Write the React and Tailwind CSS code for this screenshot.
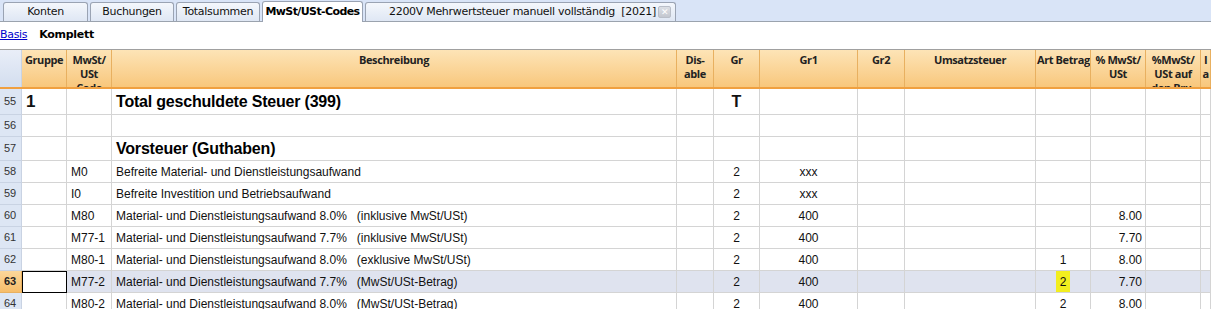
import React from "react";

const cols = "grid-cols-[22px_45px_45px_565px_37px_46px_98px_47px_131px_55px_55px_55px_10px]";

const headers = [
  "",
  "Gruppe",
  "MwSt/ USt Code",
  "Beschreibung",
  "Dis-able",
  "Gr",
  "Gr1",
  "Gr2",
  "Umsatzsteuer",
  "Art Betrag",
  "% MwSt/ USt",
  "%MwSt/ USt auf den Bru-",
  "I a",
];

const rows = [
  { n: 55, g: "1", code: "", desc: "Total geschuldete Steuer (399)", gr: "T", gr1: "", art: "", pct: "", big: true, h: "h-[26px]" },
  { n: 56, g: "", code: "", desc: "", gr: "", gr1: "", art: "", pct: "", h: "h-[22px]" },
  { n: 57, g: "", code: "", desc: "Vorsteuer (Guthaben)", gr: "", gr1: "", art: "", pct: "", big: true, h: "h-[24px]" },
  { n: 58, code: "M0", desc: "Befreite Material- und Dienstleistungsaufwand", gr: "2", gr1: "xxx", art: "", pct: "", h: "h-[22px]" },
  { n: 59, code: "I0", desc: "Befreite Investition und Betriebsaufwand", gr: "2", gr1: "xxx", art: "", pct: "", h: "h-[22px]" },
  { n: 60, code: "M80", desc: "Material- und Dienstleistungsaufwand 8.0%   (inklusive MwSt/USt)", gr: "2", gr1: "400", art: "", pct: "8.00", h: "h-[22px]" },
  { n: 61, code: "M77-1", desc: "Material- und Dienstleistungsaufwand 7.7%   (inklusive MwSt/USt)", gr: "2", gr1: "400", art: "", pct: "7.70", h: "h-[22px]" },
  { n: 62, code: "M80-1", desc: "Material- und Dienstleistungsaufwand 8.0%   (exklusive MwSt/USt)", gr: "2", gr1: "400", art: "1", pct: "8.00", h: "h-[22px]" },
  { n: 63, code: "M77-2", desc: "Material- und Dienstleistungsaufwand 7.7%   (MwSt/USt-Betrag)", gr: "2", gr1: "400", art: "2", pct: "7.70", sel: true, h: "h-[22px]" },
  { n: 64, code: "M80-2", desc: "Material- und Dienstleistungsaufwand 8.0%   (MwSt/USt-Betrag)", gr: "2", gr1: "400", art: "2", pct: "8.00", h: "h-[22px]" },
];

function Tab({ label, active, w, close }) {
  if (active) {
    return (
      <div className={"relative z-10 -mb-px flex h-[21px] items-center justify-center self-end whitespace-nowrap rounded-t-[3px] border border-b-0 border-[#9aa3b3] bg-white pt-[1px] text-[11px] font-bold tracking-[-0.6px] text-black " + w}>
        {label}
      </div>
    );
  }
  return (
    <div
      className={
        "flex h-[19px] items-center self-end whitespace-nowrap rounded-t-[3px] border border-b-0 border-[#9aa3b3] bg-gradient-to-b from-[#f4f7fc] to-[#dfe7f4] text-[11px] text-[#111] " +
        w +
        (close ? " justify-between pl-[23px] pr-[4px]" : " justify-center")
      }
    >
      <span className="whitespace-pre">{label}</span>
      {close && (
        <span className="flex h-[12px] w-[13px] items-center justify-center rounded-[2px] border border-[#b9bec8] bg-gradient-to-b from-[#dcdfe5] to-[#c3c7cf] text-[9px] font-bold leading-none text-white">
          ✕
        </span>
      )}
    </div>
  );
}

export default function App() {
  return (
    <div className="h-[309px] w-[1211px] overflow-hidden bg-white font-['Liberation_Sans',Arial,sans-serif]">
      {/* Tab bar */}
      <div className="flex h-[22px] items-end gap-[2px] border-b border-[#9ba3ae] bg-[#d9e4f7] pl-[3px] font-['DejaVu_Sans',sans-serif] tracking-[-0.3px]">
        <Tab label="Konten" w="w-[85px]" />
        <Tab label="Buchungen" w="w-[84px]" />
        <Tab label="Totalsummen" w="w-[84px]" />
        <Tab label="MwSt/USt-Codes" active w="w-[101px]" />
        <Tab label="2200V Mehrwertsteuer manuell vollständig  [2021]" w="w-[311px]" close />
      </div>

      {/* View selector */}
      <div className="flex h-[27px] items-center gap-[12px] pl-0 font-['DejaVu_Sans',sans-serif] text-[11px] tracking-[-0.3px]">
        <span className="text-[#0000cc] underline">Basis</span>
        <span className="font-bold text-black">Komplett</span>
      </div>

      {/* Grid */}
      <div className="border-t border-[#a0a0a0]">
        {/* Header */}
        <div className={"grid h-[39px] border-b-2 border-[#f0a040] " + cols}>
          {headers.map((h, i) =>
            i === 0 ? (
              <div key={i} className="border-r border-[#c9d3e3] bg-gradient-to-b from-[#e9eef8] to-[#d3deef]" />
            ) : (
              <div
                key={i}
                className={
                  "overflow-hidden border-r border-[#e8b060] bg-gradient-to-b from-[#fde4b6] to-[#f8c77c] px-[1px] pt-[3px] text-center font-['Open_Sans',sans-serif] text-[11px] font-bold leading-[14px] tracking-[-0.4px] text-[#222] " +
                  (i === 9 ? "whitespace-nowrap" : "")
                }
              >
                {h}
              </div>
            )
          )}
        </div>

        {/* Rows */}
        {rows.map((r) => {
          const bg = r.sel ? "bg-[#dfe3ef]" : "bg-white";
          const cell = "border-r border-b border-[#d4d4d4] flex items-center overflow-hidden whitespace-pre text-[12px] text-[#111] " + bg;
          return (
            <div key={r.n} className={"grid " + cols + " " + r.h}>
              <div
                className={
                  "flex items-center border-b border-r pl-[4px] text-[11px] " +
                  (r.sel
                    ? "border-[#e8b060] bg-gradient-to-b from-[#fbd79a] to-[#f6bd6a] font-bold text-[#222]"
                    : "border-[#c9d3e3] bg-[#dde6f4] text-[#333]")
                }
              >
                {r.n}
              </div>
              <div className={r.sel ? "flex items-center border-[1.5px] border-black bg-white" : cell + " pl-[4px]"}>
                {r.g && <span className="text-[17px] font-bold">{r.g}</span>}
              </div>
              <div className={cell + " pl-[4px]"}>{r.code}</div>
              <div className={cell + " pl-[4px]"}>
                {r.big ? <span className="text-[16px] font-bold tracking-[-0.2px] text-black">{r.desc}</span> : r.desc}
              </div>
              <div className={cell} />
              <div className={cell + " justify-center"}>
                {r.gr === "T" ? <span className="text-[16px] font-bold">T</span> : r.gr}
              </div>
              <div className={cell + " justify-center"}>{r.gr1}</div>
              <div className={cell} />
              <div className={cell} />
              <div className={cell + " justify-center"}>
                {r.sel ? <span className="bg-[#f2ee1e] px-[4px] py-[2px]">{r.art}</span> : r.art}
              </div>
              <div className={cell + " justify-end pr-[3px]"}>{r.pct}</div>
              <div className={cell} />
              <div className={cell} />
            </div>
          );
        })}
      </div>
    </div>
  );
}
